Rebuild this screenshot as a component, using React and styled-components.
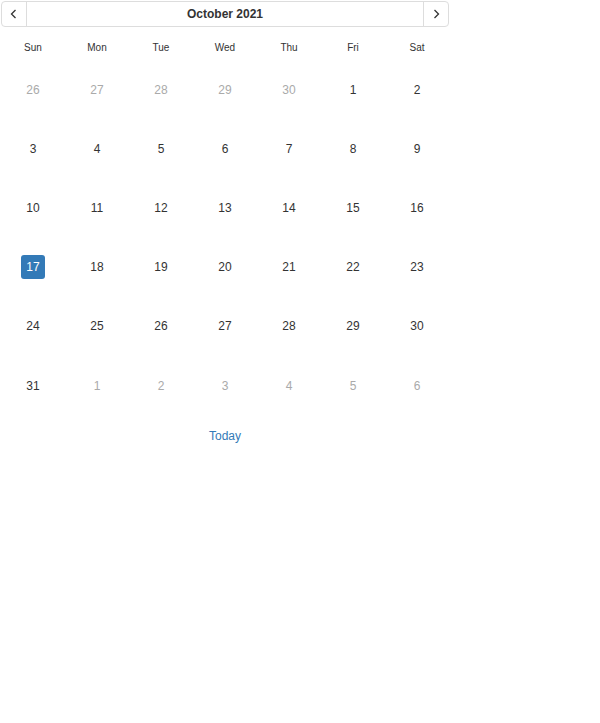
import styled, { createGlobalStyle } from "styled-components";

const GlobalStyle = createGlobalStyle`
  body {
    margin: 0;
    font-family: "Liberation Sans", Arial, sans-serif;
    color: #333;
    background: #fff;
  }
`;

const WEEKDAYS = ["Sun", "Mon", "Tue", "Wed", "Thu", "Fri", "Sat"];

const buildDays = () => {
  const days = [];
  [26, 27, 28, 29, 30].forEach((d) => days.push({ day: d, muted: true }));
  for (let d = 1; d <= 31; d++) days.push({ day: d, selected: d === 17 });
  [1, 2, 3, 4, 5, 6].forEach((d) => days.push({ day: d, muted: true }));
  return days;
};

const Chevron = ({ dir }) => (
  <svg width="12" height="12" viewBox="0 0 12 12" fill="none">
    <path
      d={dir === "left" ? "M7.5 2 L3.5 6 L7.5 10" : "M4.5 2 L8.5 6 L4.5 10"}
      stroke="#333"
      strokeWidth="1.3"
      strokeLinejoin="miter"
    />
  </svg>
);

const App = () => {
  const days = buildDays();
  return (
    <>
      <GlobalStyle />
      <Calendar>
        <Header>
          <NavButton side="left">
            <Chevron dir="left" />
          </NavButton>
          <Title>October 2021</Title>
          <NavButton side="right">
            <Chevron dir="right" />
          </NavButton>
        </Header>
        <Weekdays>
          {WEEKDAYS.map((w) => (
            <Weekday key={w}>{w}</Weekday>
          ))}
        </Weekdays>
        <Grid>
          {days.map((d, i) => (
            <Cell key={i}>
              <Day muted={d.muted} selected={d.selected}>
                {d.day}
              </Day>
            </Cell>
          ))}
        </Grid>
        <Footer>
          <TodayLink>Today</TodayLink>
        </Footer>
      </Calendar>
    </>
  );
};

const Calendar = styled.div`
  width: 448px;
  margin: 1px;
`;

const Header = styled.div`
  display: flex;
  height: 24px;
  border: 1px solid #ddd;
  border-radius: 4px;
`;

const NavButton = styled.div`
  width: 24px;
  display: flex;
  align-items: center;
  justify-content: center;
  border-right: ${(p) => (p.side === "left" ? "1px solid #ddd" : "none")};
  border-left: ${(p) => (p.side === "right" ? "1px solid #ddd" : "none")};
`;

const Title = styled.div`
  flex: 1;
  display: flex;
  align-items: center;
  justify-content: center;
  font-size: 12px;
  font-weight: bold;
`;

const Weekdays = styled.div`
  display: grid;
  grid-template-columns: repeat(7, 64px);
  margin-top: 8px;
  height: 25px;
`;

const Weekday = styled.div`
  display: flex;
  align-items: center;
  justify-content: center;
  font-size: 10px;
`;

const Grid = styled.div`
  display: grid;
  grid-template-columns: repeat(7, 64px);
  grid-auto-rows: 59.2px;
`;

const Cell = styled.div`
  display: flex;
  align-items: center;
  justify-content: center;
`;

const Day = styled.span`
  width: 24px;
  height: 24px;
  display: flex;
  align-items: center;
  justify-content: center;
  font-size: 12px;
  border-radius: 3px;
  color: ${(p) => (p.selected ? "#fff" : p.muted ? "#aaa" : "#333")};
  background: ${(p) => (p.selected ? "#337ab7" : "transparent")};
`;

const Footer = styled.div`
  display: flex;
  justify-content: center;
  padding-top: 14px;
`;

const TodayLink = styled.a`
  font-size: 12px;
  color: #337ab7;
  cursor: pointer;
`;

export default App;
